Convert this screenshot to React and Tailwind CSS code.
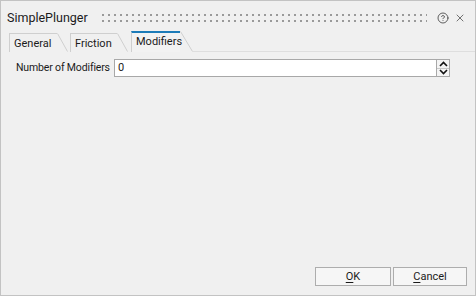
import { CircleHelp, X } from 'lucide-react'

const font = { fontFamily: 'Roboto, "Liberation Sans", Arial, sans-serif' }

function Tab({ label, width, selected, gap }) {
  return (
    <div className={`flex items-end ${gap}`}>
      <div
        className={`flex items-center border-l border-[#cfcfcf] pl-[4px] ${
          selected
            ? 'h-[21px] border-t-2 border-t-[#1c7bb8] pb-[2px] bg-[#f2f2f2]'
            : 'h-[19px] border-t border-t-[#cfcfcf] pt-[1px]'
        } ${width}`}
      >
        <span className="text-[11px] text-[#1b1b1b] leading-none">{label}</span>
      </div>
      <svg width={selected ? 13 : 11} height={selected ? 21 : 19} className="shrink-0">
        <line
          x1="0.5"
          y1="0.5"
          x2={selected ? 12.5 : 10.5}
          y2={selected ? 20.5 : 18.5}
          stroke="#cfcfcf"
          strokeWidth="1"
        />
      </svg>
    </div>
  )
}

export default function App() {
  return (
    <div
      className="w-[476px] h-[296px] border border-[#c3c3c3] bg-[#f0f0f0] flex flex-col overflow-hidden"
      style={font}
    >
      {/* Title bar */}
      <div className="flex items-center h-[24px] mt-[5px] pl-[6px] pr-[9px]">
        <span className="text-[12.5px] text-[#1b1b1b] leading-none shrink-0">SimplePlunger</span>
        <svg className="flex-1 h-[8px] ml-[14px] mr-[10px]">
          <defs>
            <pattern id="grip" width="6" height="6" patternUnits="userSpaceOnUse">
              <rect width="2" height="2" fill="#9a9a9a" />
            </pattern>
          </defs>
          <rect width="100%" height="8" fill="url(#grip)" />
        </svg>
        <CircleHelp size={12} strokeWidth={1.6} className="text-[#3a3a3a] shrink-0" />
        <X size={12} strokeWidth={1.4} className="text-[#3a3a3a] ml-[5px] shrink-0" />
      </div>

      {/* Tabs */}
      <div className="flex items-end pl-[8px] h-[22px]">
        <Tab label="General" width="w-[48px]" />
        <Tab label="Friction" width="w-[47px]" gap="ml-[2px]" />
        <Tab label="Modifiers" width="w-[49px]" gap="ml-[3px]" selected />
        <div className="flex-1 border-b border-[#dedede]" />
      </div>

      {/* Content */}
      <div className="flex items-center pl-[15px] pr-[25px] mt-[7px]">
        <span className="w-[98px] shrink-0 whitespace-nowrap text-[10.5px] tracking-[-0.15px] text-[#1b1b1b]">
          Number of Modifiers
        </span>
        <div className="flex-1 h-[18px] border border-[#a8a8a8] bg-white flex items-center pl-[3px] text-[11px] text-[#1b1b1b]">
          0
        </div>
        <div className="w-[13px] h-[18px] border border-l-0 border-[#a8a8a8] flex flex-col bg-[#f4f4f4]">
          <div className="flex-1 flex items-center justify-center border-b border-[#c8c8c8]">
            <svg width="9" height="6" viewBox="0 0 9 6">
              <path d="M1 5 L4.5 1.5 L8 5" fill="none" stroke="#111" strokeWidth="1.6" />
            </svg>
          </div>
          <div className="flex-1 flex items-center justify-center">
            <svg width="9" height="6" viewBox="0 0 9 6">
              <path d="M1 1 L4.5 4.5 L8 1" fill="none" stroke="#111" strokeWidth="1.6" />
            </svg>
          </div>
        </div>
      </div>

      <div className="flex-1" />

      {/* Buttons */}
      <div className="flex justify-end gap-[2px] pr-[8px] pb-[9px]">
        <button className="w-[76px] h-[19px] border border-[#adadad] bg-[#f6f6f6] text-[11px] text-[#1b1b1b] leading-none">
          <span className="underline underline-offset-2">O</span>K
        </button>
        <button className="w-[74px] h-[19px] border border-[#adadad] bg-[#f6f6f6] text-[11px] text-[#1b1b1b] leading-none">
          <span className="underline underline-offset-2">C</span>ancel
        </button>
      </div>
    </div>
  )
}
